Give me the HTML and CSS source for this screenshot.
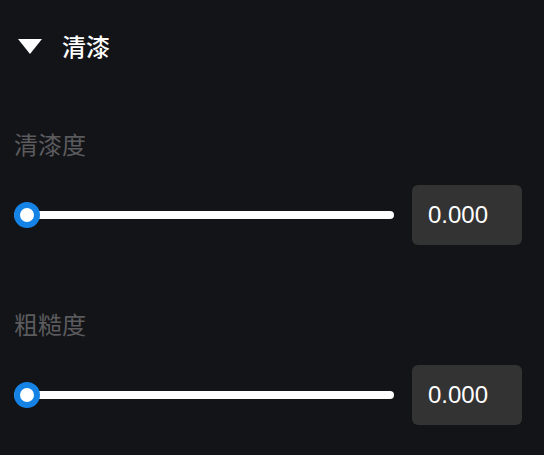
FILE: index.html
```html
<!DOCTYPE html>
<html>
<head>
    <title>清漆</title>
    <link rel="stylesheet" href="styles.css">
</head>
<body>
    <div class="panel">
        <div class="panel-header">
            <span class="caret"></span>
            <span class="panel-title">清漆</span>
        </div>

        <div class="field">
            <div class="field-label">清漆度</div>
            <div class="field-row">
                <input class="slider" type="range" min="0" max="1" step="0.001" value="0">
                <div class="value-box">0.000</div>
            </div>
        </div>

        <div class="field">
            <div class="field-label">粗糙度</div>
            <div class="field-row">
                <input class="slider" type="range" min="0" max="1" step="0.001" value="0">
                <div class="value-box">0.000</div>
            </div>
        </div>
    </div>
</body>
</html>
```

FILE: styles.css
```css
body {
    margin: 0;
    background: #131418;
    font-family: "Liberation Sans", "Noto Sans CJK SC", sans-serif;
    overflow: hidden;
}

.panel {
    padding: 28px 22px 0 14px;
}

.panel-header {
    display: flex;
    align-items: center;
    height: 36px;
    padding-left: 4px;
}

.caret {
    width: 0;
    height: 0;
    border-left: 12.5px solid transparent;
    border-right: 12.5px solid transparent;
    border-top: 15px solid #ffffff;
    margin-right: 20px;
}

.panel-title {
    color: #ffffff;
    font-family: "Noto Sans CJK SC", sans-serif;
    font-size: 24px;
    font-weight: 500;
    line-height: 36px;
}

.field {
    margin-top: 65px;
}

.field + .field {
    margin-top: 64px;
}

.field-label {
    color: #5b5b5e;
    font-size: 24px;
    line-height: 34px;
}

.field-row {
    display: flex;
    align-items: center;
    gap: 18px;
    margin-top: 22px;
}

.slider {
    -webkit-appearance: none;
    appearance: none;
    flex: 1;
    margin: 0;
    height: 26px;
    background: transparent;
}

.slider::-webkit-slider-runnable-track {
    height: 8px;
    border-radius: 4px;
    background: #ffffff;
}

.slider::-webkit-slider-thumb {
    -webkit-appearance: none;
    width: 26px;
    height: 26px;
    margin-top: -9px;
    border-radius: 50%;
    box-sizing: border-box;
    border: 6px solid #1582e6;
    background: #ffffff;
}

.value-box {
    width: 110px;
    height: 60px;
    box-sizing: border-box;
    padding-left: 16px;
    display: flex;
    align-items: center;
    background: #333333;
    border-radius: 6px;
    color: #ffffff;
    font-size: 24px;
}
```
